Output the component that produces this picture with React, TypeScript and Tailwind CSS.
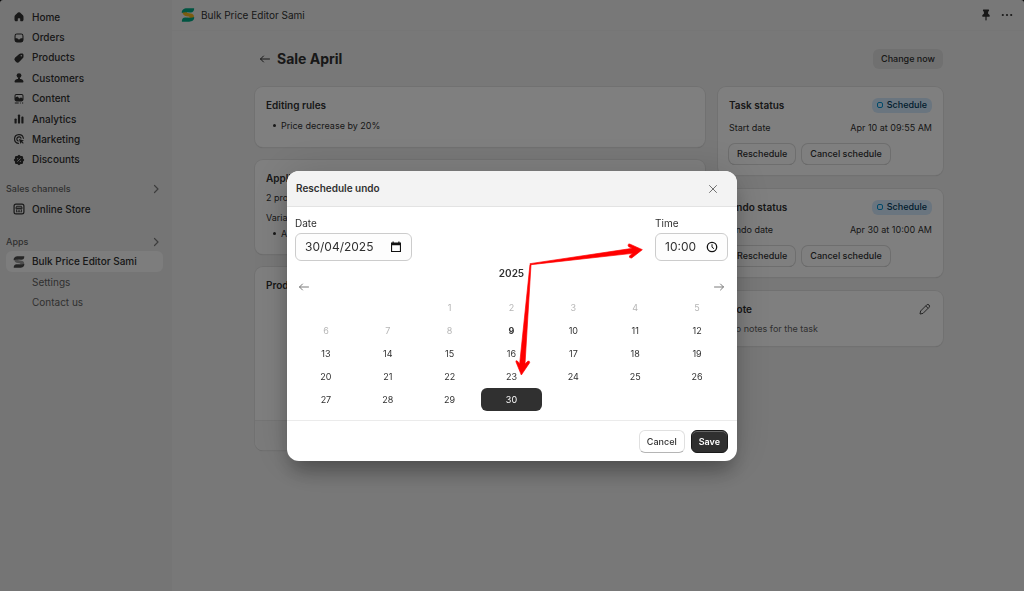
import { useState, type ReactNode } from 'react';

const icons: Record<string, ReactNode> = {
  home: (
    <path d="M8.300 2.700a2.600 2.600 0 0 1 3.400 0l4.400 3.900c.9.800 1.400 1.900 1.400 3.100v4.800c0 1.500-1.100 2.500-2.500 2.500h-2c-.6 0-1-.4-1-1v-3c0-.6-.4-1-1-1H9c-.6 0-1 .4-1 1v3c0 .6-.4 1-1 1H5c-1.400 0-2.500-1-2.500-2.500V9.700c0-1.200.5-2.300 1.400-3.100z" />
  ),
  orders: (
    <path
      fillRule="evenodd"
      d="M6.500 2.500h7a4 4 0 0 1 4 4v7a4 4 0 0 1-4 4h-7a4 4 0 0 1-4-4v-7a4 4 0 0 1 4-4zm0 1.800c-1.300 0-2.200.9-2.200 2.200v4h2.400c.7 0 1.100.3 1.400.9.300.7.800 1.100 1.900 1.100s1.600-.4 1.900-1.100c.3-.6.7-.9 1.400-.9h2.400v-4c0-1.300-.9-2.200-2.200-2.200z"
    />
  ),
  products: (
    <path
      fillRule="evenodd"
      d="M10.500 3.400c.6-.6 1.400-.9 2.200-.9h2.500c1.300 0 2.300 1 2.300 2.300v3c0 .8-.3 1.600-.9 2.200l-6 6.300a4 4 0 0 1-5.700 0l-1.300-1.300a4 4 0 0 1 0-5.700zM13.800 7.300a1.200 1.200 0 1 0 0-2.400 1.200 1.200 0 0 0 0 2.400z"
    />
  ),
  customers: (
    <>
      <circle cx="10" cy="6" r="4" />
      <path d="M8.300 9h3.400v3H8.300zM2.500 16.200c0-2.900 3.400-4.900 7.500-4.900s7.500 2 7.500 4.900c0 .8-.6 1.300-1.300 1.300H3.800c-.7 0-1.300-.5-1.300-1.300z" />
    </>
  ),
  content: (
    <>
      <path
        fillRule="evenodd"
        d="M5.500 1.500h9a3 3 0 0 1 3 3v6.500a3 3 0 0 1-3 3h-9a3 3 0 0 1-3-3V4.500a3 3 0 0 1 3-3zm0 1.700c-.8 0-1.300.5-1.300 1.300v3.200l2-1.500c.6-.4 1.200-.4 1.700.1l3 2.700 1.500-1.100c.6-.4 1.200-.4 1.800 0l1.600 1.300V4.500c0-.8-.5-1.300-1.300-1.300z"
      />
      <path d="M3 15.800h6.500v1.700H3zM11.500 15.800H13v1.700h-1.500zM15 15.800h2v1.700h-2z" />
    </>
  ),
  analytics: (
    <>
      <rect x="2.500" y="9" width="3.600" height="8.500" rx="1.400" />
      <rect x="8.200" y="2.500" width="3.600" height="15" rx="1.400" />
      <rect x="13.900" y="6" width="3.600" height="11.500" rx="1.400" />
    </>
  ),
  marketing: (
    <>
      <path
        fill="none"
        stroke="currentColor"
        strokeWidth="2"
        strokeLinecap="round"
        d="M17.300 8.800A7.400 7.400 0 1 0 9 17.300M13.300 8.600A3.600 3.600 0 1 0 8.600 13.300"
      />
      <path d="M9.900 9.900 18.300 12.700l-3 1.600 2.600 2.500-1.300 1.300-2.500-2.600-1.600 2.900z" />
    </>
  ),
  discounts: (
    <>
      <rect x="3.300" y="3.300" width="13.400" height="13.400" rx="2" />
      <rect x="3.300" y="3.300" width="13.400" height="13.400" rx="2" transform="rotate(45 10 10)" />
      <path stroke="#ebebeb" strokeWidth="1.300" strokeLinecap="round" d="M12.300 7.700l-4.600 4.600" />
      <circle cx="7.700" cy="7.900" r="1" fill="#ebebeb" />
      <circle cx="12.300" cy="12.100" r="1" fill="#ebebeb" />
    </>
  ),
  store: (
    <>
      <path
        fillRule="evenodd"
        d="M5 .8h10A4.200 4.200 0 0 1 19.200 5v10a4.200 4.200 0 0 1-4.200 4.200H5A4.200 4.200 0 0 1 .8 15V5A4.200 4.200 0 0 1 5 .8zm0 2A2.200 2.200 0 0 0 2.800 5v10c0 1.200 1 2.200 2.200 2.200h10a2.200 2.200 0 0 0 2.200-2.200V5A2.200 2.200 0 0 0 15 2.800z"
      />
      <path
        fill="none"
        stroke="currentColor"
        strokeWidth="1.500"
        d="M6 5.500h8l1.200 3H4.800zM5 8.500c0 2.500 3.300 2.500 3.300 0 0 2.500 3.400 2.500 3.400 0 0 2.500 3.300 2.500 3.300 0M6 11v4.500M14 11v4.500M8.500 15.500v-2.300h3v2.300"
      />
    </>
  ),
};

function Icon({ name }: { name: string }) {
  return (
    <svg viewBox="0 0 20 20" fill="currentColor" className="size-3" aria-hidden="true">
      {icons[name]}
    </svg>
  );
}

function Logo({ className, wing, mid }: { className: string; wing: string; mid: string }) {
  return (
    <svg viewBox="0 0 20 20" className={className} aria-hidden="true">
      <path fill={mid} d="M2 5.500c0 4 2.500 5.800 6 6.200l3 .4c1.800.2 1.700 2 0 2H8.500v2h6c2.500-.3 4-1.700 4-4 0-2.500-1.800-3.900-4.500-4.300l-4.500-.6c-1.500-.2-1.500-1.700 0-1.700l2-1.500H5z" />
      <path fill={wing} d="M1.200 7C.6 2.800 4 .3 8.500.3h10.300C19 4.200 17 6.500 13.500 6.300L8 6C5 5.800 3 6 1.200 7zM18.800 13c.6 4.200-2.800 6.700-7.300 6.700H1.200C1 15.800 3 13.500 6.500 13.700l5.500.3c3 .2 5 0 6.800-1z" />
    </svg>
  );
}

function Chevron() {
  return (
    <svg viewBox="0 0 12 12" className="size-3 text-[#7a7a7a]" fill="none" stroke="currentColor" strokeWidth="1.200" strokeLinecap="round" strokeLinejoin="round" aria-hidden="true">
      <path d="M4.500 2.500 8 6l-3.500 3.500" />
    </svg>
  );
}

function Arrow({ flip }: { flip?: boolean }) {
  return (
    <svg viewBox="0 0 12 12" className="size-3" fill="none" stroke="currentColor" strokeLinecap="round" strokeLinejoin="round" aria-hidden="true">
      <path d={flip ? 'M1.500 6h9M7.500 3l3 3-3 3' : 'M10.500 6h-9M4.500 3l-3 3 3 3'} />
    </svg>
  );
}

const nav = [
  { icon: 'home', label: 'Home' },
  { icon: 'orders', label: 'Orders' },
  { icon: 'products', label: 'Products' },
  { icon: 'customers', label: 'Customers' },
  { icon: 'content', label: 'Content' },
  { icon: 'analytics', label: 'Analytics' },
  { icon: 'marketing', label: 'Marketing' },
  { icon: 'discounts', label: 'Discounts' },
];

function Sidebar() {
  return (
    <aside className="w-[172px] shrink-0 bg-[#ebebeb] pt-[7px] text-[10px] font-medium">
      <nav className="grid h-[163px] grid-rows-8">
        {nav.map(item => (
          <a key={item.label} href="#" className="flex items-center gap-[7px] pl-[13px]">
            <Icon name={item.icon} />
            {item.label}
          </a>
        ))}
      </nav>

      <button className="mt-[11px] flex h-4 w-full items-center justify-between pr-[10px] pl-[6px] text-[9px] text-[#616161]">
        Sales channels
        <Chevron />
      </button>
      <a href="#" className="mt-[2px] flex h-5 items-center gap-[7px] pl-[13px]">
        <Icon name="store" />
        Online Store
      </a>

      <button className="mt-[15px] flex h-4 w-full items-center justify-between pr-[10px] pl-[6px] text-[9px] text-[#616161]">
        Apps
        <Chevron />
      </button>
      <a href="#" className="mt-[1px] mr-[9px] ml-[6px] flex h-[21px] items-center gap-[7px] rounded-md bg-[#fafafa] pl-[7px]">
        <Logo className="size-3" wing="#4a4a4a" mid="#9a9a9a" />
        Bulk Price Editor Sami
      </a>
      <a href="#" className="flex h-5 items-center pl-8 font-normal text-[#616161]">Settings</a>
      <a href="#" className="flex h-5 items-center pl-8 font-normal text-[#616161]">Contact us</a>
    </aside>
  );
}

function Card({ children, className = '' }: { children: ReactNode; className?: string }) {
  return (
    <section className={`rounded-lg bg-white px-[11px] pt-[10px] text-[9px] shadow-[0_0_0_1px_#e3e3e3,0_1px_1px_#bdbdbd] ${className}`}>
      {children}
    </section>
  );
}

function CardTitle({ children }: { children: ReactNode }) {
  return <h2 className="h-4 text-[10px] leading-4 font-semibold">{children}</h2>;
}

function Bullet({ children }: { children: ReactNode }) {
  return (
    <li className="flex h-[15px] items-center gap-[5px]">
      <span className="size-[3px] rounded-full bg-[#303030]"></span>
      {children}
    </li>
  );
}

function SmallButton({ children }: { children: ReactNode }) {
  return (
    <button className="h-5 rounded-md bg-white px-2 font-medium shadow-[0_0_0_1px_#dcdcdc,0_1px_0_#a8a8a8]">
      {children}
    </button>
  );
}

function StatusCard({ title, label, date }: { title: string; label: string; date: string }) {
  return (
    <Card className="pb-[11px]">
      <div className="flex h-4 items-center justify-between">
        <CardTitle>{title}</CardTitle>
        <span className="flex h-[15px] items-center gap-1 rounded-md bg-[#d5ebff] px-[5px] font-medium text-[#003a5a]">
          <span className="size-[6px] rounded-[2px] border border-[#0094d5]"></span>
          Schedule
        </span>
      </div>
      <div className="mt-2 flex h-[14px] items-center justify-between">
        <span>{label}</span>
        <span>{date}</span>
      </div>
      <div className="mt-[9px] flex gap-[7px]">
        <SmallButton>Reschedule</SmallButton>
        <SmallButton>Cancel schedule</SmallButton>
      </div>
    </Card>
  );
}

function Page() {
  return (
    <main className="min-w-0 flex-1 bg-[#f1f1f1] text-[10px]">
      <header className="flex h-[31px] items-center border-b border-[#ececec] pr-[11px] pl-[9px]">
        <Logo className="size-[14px]" wing="#00a884" mid="#f5b820" />
        <span className="ml-[6px]">Bulk Price Editor Sami</span>
        <button aria-label="Pin" className="ml-auto">
          <svg viewBox="0 0 12 12" className="size-3" fill="currentColor" aria-hidden="true">
            <path d="M3.500.5h5c.4 0 .6.3.6.7 0 .8-.6 1.200-1 1.500v2.100c1 .5 1.700 1.300 1.700 2.300 0 .4-.3.6-.6.6H6.600V11L6 11.800 5.400 11V7.700H2.800c-.3 0-.6-.2-.6-.6 0-1 .7-1.800 1.700-2.300V2.700c-.4-.3-1-.7-1-1.500 0-.4.2-.7.6-.7z" />
          </svg>
        </button>
        <button aria-label="More actions" className="ml-[9px]">
          <svg viewBox="0 0 12 12" className="size-3" fill="currentColor" aria-hidden="true">
            <circle cx="1.800" cy="6" r="1.100" />
            <circle cx="6" cy="6" r="1.100" />
            <circle cx="10.200" cy="6" r="1.100" />
          </svg>
        </button>
      </header>

      <div className="pr-[81px] pb-4 pl-[83px]">
        <div className="flex h-14 items-center">
          <a href="#" aria-label="Back" className="ml-1 text-[#303030]">
            <Arrow />
          </a>
          <h1 className="ml-[6px] text-sm font-bold">Sale April</h1>
          <button className="ml-auto h-5 rounded-md bg-[#e0e0e0] px-2 text-[9px] font-medium">Change now</button>
        </div>

        <div className="flex items-start gap-[13px]">
          <div className="flex min-w-0 flex-1 flex-col gap-[13px]">
            <Card className="pb-[14px]">
              <CardTitle>Editing rules</CardTitle>
              <ul className="mt-[5px] pl-[7px]">
                <Bullet>Price decrease by 20%</Bullet>
              </ul>
            </Card>
            <Card className="pb-[13px]">
              <CardTitle>Applies to</CardTitle>
              <p className="mt-1 leading-4">2 products</p>
              <p className="mt-1 leading-4">Varia</p>
              <ul className="pl-[7px]">
                <Bullet>All</Bullet>
              </ul>
            </Card>
            <Card>
              <CardTitle>Products</CardTitle>
              <div className="-mx-[11px] mt-[127px] h-[30px] rounded-b-lg border-t border-[#ebebeb] bg-[#f7f7f7]"></div>
            </Card>
          </div>

          <div className="flex w-[225px] shrink-0 flex-col gap-[14px]">
            <StatusCard title="Task status" label="Start date" date="Apr 10 at 09:55 AM" />
            <StatusCard title="Undo status" label="Undo date" date="Apr 30 at 10:00 AM" />
            <Card className="pb-[9px]">
              <div className="flex h-4 items-center justify-between">
                <CardTitle>Note</CardTitle>
                <button aria-label="Edit note" className="text-[#4a4a4a]">
                  <svg viewBox="0 0 14 14" className="size-[14px]" fill="none" stroke="currentColor" strokeLinejoin="round" aria-hidden="true">
                    <path d="M2 12l.6-3L8.700 2.900a1.700 1.700 0 0 1 2.400 2.400L5 11.400zM7.700 3.900l2.400 2.400" />
                  </svg>
                </button>
              </div>
              <p className="mt-1 leading-4 text-[#616161]">No notes for the task</p>
            </Card>
          </div>
        </div>
      </div>
    </main>
  );
}

const firstWeekday = 2;
const today = 9;

function Calendar({ selected, onSelect }: { selected: number; onSelect: (day: number) => void }) {
  const days = Array.from({ length: 30 }, (_, i) => i + 1);

  const tone = (day: number) => {
    if (day === selected) return 'bg-[#303030] text-white';
    if (day === today) return 'font-bold';
    if (day < today) return 'text-[#b5b5b5]';
    return '';
  };

  return (
    <div>
      <p className="mt-1 h-4 text-center leading-4 font-semibold">2025</p>
      <div className="flex h-3 items-center justify-between px-[3px] text-[#7a7a7a]">
        <button aria-label="Previous month"><Arrow /></button>
        <button aria-label="Next month"><Arrow flip /></button>
      </div>
      <div className="mt-[3px] grid grid-cols-7 text-[9px]">
        {Array.from({ length: firstWeekday }, (_, i) => <span key={`blank-${i}`}></span>)}
        {days.map(day => (
          <button key={day} onClick={() => onSelect(day)} className={`h-[23px] rounded-md ${tone(day)}`}>
            {day}
          </button>
        ))}
      </div>
    </div>
  );
}

function RescheduleModal() {
  const [day, setDay] = useState(30);
  const [time, setTime] = useState('10:00');

  return (
    <div className="fixed inset-0 flex items-center justify-center bg-black/50 pt-[41px]">
      <div role="dialog" aria-label="Reschedule undo" className="relative w-[450px] rounded-xl bg-white text-[10px] shadow-[0_14px_20px_-4px_rgba(0,0,0,0.3),0_0_40px_rgba(0,0,0,0.15)]">
        <div className="flex h-9 items-center justify-between rounded-t-xl border-b border-[#e3e3e3] bg-[#f3f3f3] pr-[18px] pl-[9px]">
          <h2 className="font-semibold">Reschedule undo</h2>
          <button aria-label="Close" className="text-[#707070]">
            <svg viewBox="0 0 12 12" className="size-3" fill="none" stroke="currentColor" strokeLinecap="round" aria-hidden="true">
              <path d="M2.500 2.500l7 7M9.500 2.500l-7 7" />
            </svg>
          </button>
        </div>

        <div className="py-[9px] pr-[9px] pl-2">
          <div className="flex justify-between">
            <label className="block">
              <span className="block h-[14px] leading-[14px]">Date</span>
              <span className="mt-[3px] flex h-7 w-[117px] items-center rounded-md border border-[#cccccc] bg-[#fdfdfd] px-[9px]">
                <input
                  type="text"
                  value={`${String(day).padStart(2, '0')}/04/2025`}
                  readOnly
                  className="w-full min-w-0 bg-transparent text-xs outline-none"
                />
                <svg viewBox="0 0 12 12" className="size-3 shrink-0" aria-hidden="true">
                  <path fill="#111" fillRule="evenodd" d="M2.500.5h1.200v1h4.600v-1h1.200v1h1.500v9.500H1V1.500h1.500zM2.100 4.200v5.700h7.800V4.200z" />
                </svg>
              </span>
            </label>
            <label className="block">
              <span className="block h-[14px] leading-[14px]">Time</span>
              <span className="mt-[3px] flex h-7 w-[73px] items-center rounded-md border border-[#cccccc] bg-[#fdfdfd] px-[9px]">
                <input
                  type="text"
                  value={time}
                  onChange={e => setTime(e.target.value)}
                  className="w-full min-w-0 bg-transparent text-xs outline-none"
                />
                <svg viewBox="0 0 12 12" className="size-3 shrink-0" fill="none" stroke="#111" strokeWidth="1.300" aria-hidden="true">
                  <circle cx="6" cy="6" r="4.700" />
                  <path strokeWidth="1" d="M6 3.200V6.200l2 1.500" />
                </svg>
              </span>
            </label>
          </div>
          <Calendar selected={day} onSelect={setDay} />
        </div>

        <div className="flex justify-end gap-[6px] border-t border-[#ebebeb] pt-[9px] pr-[9px] pb-2 text-[9px]">
          <button className="h-[23px] rounded-md border border-[#e0e0e0] border-b-[#b5b5b5] bg-white px-[7px] font-medium">Cancel</button>
          <button className="h-[23px] rounded-md border border-[#1a1a1a] bg-[#303030] px-[7px] font-semibold text-white shadow-[inset_0_1px_0_#666]">Save</button>
        </div>

        {/* callout arrows to the time field and the selected day */}
        <svg viewBox="0 0 1350 870" className="pointer-events-none absolute inset-0 h-[290px] w-[450px]" fill="#ff0000" stroke="#ff0000" strokeWidth="2" strokeLinejoin="round" aria-hidden="true">
          <path d="M729 278 1036 232 1025 227Q1020 219 1028 219L1066 236 1034 261Q1026 262 1027 255L1037 247 732 281Z" />
          <path d="M729 280 698 578 691 570Q685 567 687 573L703 612 728 575Q728 568 722 571L714 579 732 281Z" />
        </svg>
      </div>
    </div>
  );
}

export default function App() {
  return (
    <div className="bg-black font-['Inter',sans-serif] text-[#303030]">
      <div className="flex min-h-screen overflow-hidden rounded-t-[3px]">
        <Sidebar />
        <Page />
      </div>
      <RescheduleModal />
    </div>
  );
}
